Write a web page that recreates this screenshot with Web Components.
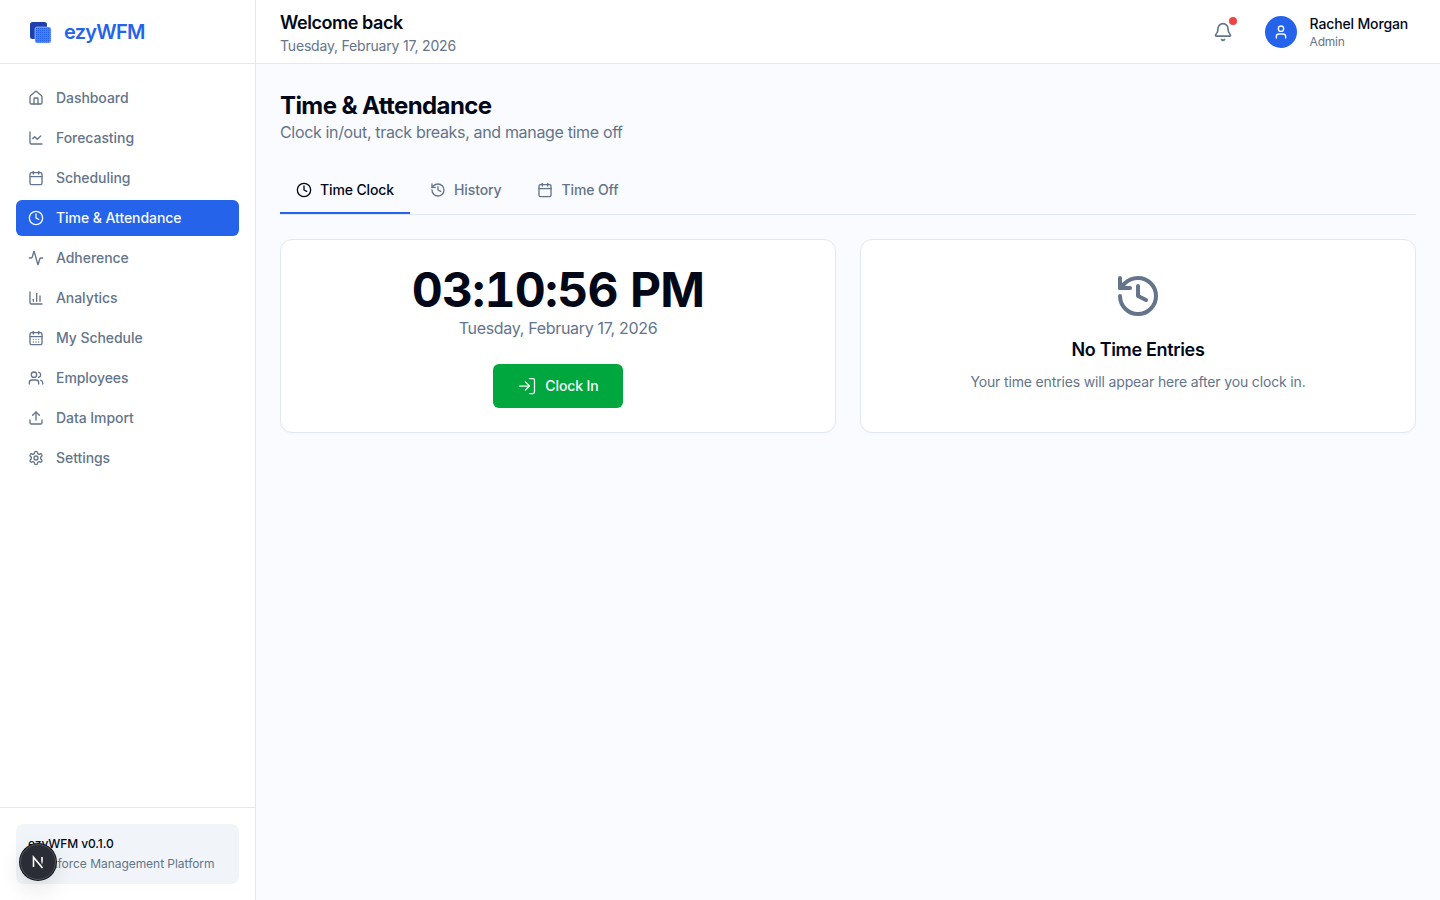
<!DOCTYPE html>
<html lang="en">
<head>
<meta charset="utf-8">
<title>ezyWFM - Time &amp; Attendance</title>
<style>
    html, body { margin: 0; height: 100%; }
    body { font-family: Inter, "Liberation Sans", sans-serif; color: #020817; background: #fafbfe; overflow: hidden; }
</style>
</head>
<body>
<wfm-app></wfm-app>
<script>
// Icon paths, one entry per glyph used on the page
const ICONS = {
    house: '<path d="M15 21v-8a1 1 0 0 0-1-1h-4a1 1 0 0 0-1 1v8"/><path d="M3 10a2 2 0 0 1 .709-1.528l7-5.999a2 2 0 0 1 2.582 0l7 5.999A2 2 0 0 1 21 10v9a2 2 0 0 1-2 2H5a2 2 0 0 1-2-2z"/>',
    'chart-line': '<path d="M3 3v16a2 2 0 0 0 2 2h16"/><path d="m19 9-5 5-4-4-3 3"/>',
    calendar: '<path d="M8 2v4"/><path d="M16 2v4"/><rect width="18" height="18" x="3" y="4" rx="2"/><path d="M3 10h18"/>',
    clock: '<circle cx="12" cy="12" r="10"/><polyline points="12 6 12 12 16 14"/>',
    activity: '<path d="M22 12h-2.48a2 2 0 0 0-1.93 1.46l-2.35 8.36a.25.25 0 0 1-.48 0L9.24 2.18a.25.25 0 0 0-.48 0l-2.35 8.36A2 2 0 0 1 4.49 12H2"/>',
    'chart-column': '<path d="M3 3v16a2 2 0 0 0 2 2h16"/><path d="M18 17V9"/><path d="M13 17V5"/><path d="M8 17v-3"/>',
    'calendar-days': '<path d="M8 2v4"/><path d="M16 2v4"/><rect width="18" height="18" x="3" y="4" rx="2"/><path d="M3 10h18"/><path d="M8 14h.01"/><path d="M12 14h.01"/><path d="M16 14h.01"/><path d="M8 18h.01"/><path d="M12 18h.01"/><path d="M16 18h.01"/>',
    users: '<path d="M16 21v-2a4 4 0 0 0-4-4H6a4 4 0 0 0-4 4v2"/><circle cx="9" cy="7" r="4"/><path d="M22 21v-2a4 4 0 0 0-3-3.87"/><path d="M16 3.13a4 4 0 0 1 0 7.75"/>',
    upload: '<path d="M21 15v4a2 2 0 0 1-2 2H5a2 2 0 0 1-2-2v-4"/><polyline points="17 8 12 3 7 8"/><line x1="12" x2="12" y1="3" y2="15"/>',
    settings: '<path d="M12.22 2h-.44a2 2 0 0 0-2 2v.18a2 2 0 0 1-1 1.73l-.43.25a2 2 0 0 1-2 0l-.15-.08a2 2 0 0 0-2.73.73l-.22.38a2 2 0 0 0 .73 2.73l.15.1a2 2 0 0 1 1 1.72v.51a2 2 0 0 1-1 1.74l-.15.09a2 2 0 0 0-.73 2.73l.22.38a2 2 0 0 0 2.73.73l.15-.08a2 2 0 0 1 2 0l.43.25a2 2 0 0 1 1 1.73V20a2 2 0 0 0 2 2h.44a2 2 0 0 0 2-2v-.18a2 2 0 0 1 1-1.73l.43-.25a2 2 0 0 1 2 0l.15.08a2 2 0 0 0 2.73-.73l.22-.39a2 2 0 0 0-.73-2.73l-.15-.08a2 2 0 0 1-1-1.74v-.5a2 2 0 0 1 1-1.74l.15-.09a2 2 0 0 0 .73-2.73l-.22-.38a2 2 0 0 0-2.73-.73l-.15.08a2 2 0 0 1-2 0l-.43-.25a2 2 0 0 1-1-1.73V4a2 2 0 0 0-2-2z"/><circle cx="12" cy="12" r="3"/>',
    bell: '<path d="M10.268 21a2 2 0 0 0 3.464 0"/><path d="M3.262 15.326A1 1 0 0 0 4 17h16a1 1 0 0 0 .74-1.673C19.41 13.956 18 12.499 18 8A6 6 0 0 0 6 8c0 4.499-1.411 5.956-2.738 7.326"/>',
    user: '<path d="M19 21v-2a4 4 0 0 0-4-4H9a4 4 0 0 0-4 4v2"/><circle cx="12" cy="7" r="4"/>',
    history: '<path d="M3 12a9 9 0 1 0 9-9 9.75 9.75 0 0 0-6.74 2.74L3 8"/><path d="M3 3v5h5"/><path d="M12 7v5l4 2"/>',
    'log-in': '<path d="M15 3h4a2 2 0 0 1 2 2v14a2 2 0 0 1-2 2h-4"/><polyline points="10 17 15 12 10 7"/><line x1="15" x2="3" y1="12" y2="12"/>'
};

const NAV = [
    ['house', 'Dashboard'],
    ['chart-line', 'Forecasting'],
    ['calendar', 'Scheduling'],
    ['clock', 'Time & Attendance', true],
    ['activity', 'Adherence'],
    ['chart-column', 'Analytics'],
    ['calendar-days', 'My Schedule'],
    ['users', 'Employees'],
    ['upload', 'Data Import'],
    ['settings', 'Settings']
];

class WfmIcon extends HTMLElement {
    connectedCallback() {
        const size = this.getAttribute('size') || 16;
        const stroke = this.getAttribute('stroke') || 2;
        this.attachShadow({ mode: 'open' }).innerHTML = `
            <style>:host { display: inline-flex; flex: none; width: ${size}px; height: ${size}px; } svg { display: block; }</style>
            <svg xmlns="http://www.w3.org/2000/svg" width="${size}" height="${size}" viewBox="0 0 24 24" fill="none"
                stroke="currentColor" stroke-width="${stroke}" stroke-linecap="round" stroke-linejoin="round">${ICONS[this.getAttribute('name')]}</svg>`;
    }
}

class WfmLogo extends HTMLElement {
    connectedCallback() {
        this.attachShadow({ mode: 'open' }).innerHTML = `
            <style>
                :host { display: flex; align-items: center; gap: 12px; }
                span { font-size: 20px; line-height: 28px; font-weight: 600; letter-spacing: -0.75px; color: #2563eb; }
                svg { display: block; }
            </style>
            <svg width="24" height="24" viewBox="0 0 24 24">
                <defs><pattern id="dots" width="2" height="2" patternUnits="userSpaceOnUse">
                    <rect width="2" height="2" fill="#3b82f6"/><rect width="1" height="1" fill="#2563eb"/>
                </pattern></defs>
                <rect x="2" y="2" width="17" height="17" rx="2.5" fill="#1e40af"/>
                <rect x="7" y="7" width="16" height="16" rx="2" fill="url(#dots)" stroke="#bfd4fb" stroke-width=".6"/>
            </svg>
            <span>ezyWFM</span>`;
    }
}

class NavItem extends HTMLElement {
    connectedCallback() {
        const active = this.hasAttribute('active');
        this.attachShadow({ mode: 'open' }).innerHTML = `
            <style>
                :host {
                    display: flex; align-items: center; gap: 12px; height: 36px; padding: 0 12px; box-sizing: border-box;
                    border-radius: 6px; font-size: 14px; line-height: 20px; font-weight: 500; letter-spacing: -0.06px;
                    color: ${active ? '#f8fafc' : '#64748b'}; background: ${active ? '#2563eb' : 'transparent'};
                }
            </style>
            <wfm-icon name="${this.getAttribute('icon')}" size="16"></wfm-icon>
            <slot></slot>`;
    }
}

class WfmSidebar extends HTMLElement {
    connectedCallback() {
        this.attachShadow({ mode: 'open' }).innerHTML = `
            <style>
                :host { display: flex; flex-direction: column; flex: none; width: 256px; height: 100%; box-sizing: border-box; background: #fff; border-right: 1px solid #e2e8f0; }
                .brand { display: flex; align-items: center; height: 64px; box-sizing: border-box; padding: 0 28px; border-bottom: 1px solid #e2e8f0; }
                nav { flex: 1; display: flex; flex-direction: column; gap: 4px; padding: 16px; }
                .foot { border-top: 1px solid #e2e8f0; padding: 16px; }
                .ver { height: 60px; box-sizing: border-box; padding: 12px; border-radius: 8px; background: #f1f5f9; font-size: 12px; line-height: 16px; }
                .ver b { display: block; font-weight: 500; letter-spacing: -0.08px; color: #020817; margin-bottom: 4px; }
                .ver span { letter-spacing: -0.04px; color: #64748b; }
            </style>
            <div class="brand"><wfm-logo></wfm-logo></div>
            <nav>${NAV.map(([icon, label, on]) => `<nav-item icon="${icon}" ${on ? 'active' : ''}>${label.replace('&', '&amp;')}</nav-item>`).join('')}</nav>
            <div class="foot"><div class="ver"><b>ezyWFM v0.1.0</b><span>Workforce Management Platform</span></div></div>`;
    }
}

class WfmHeader extends HTMLElement {
    connectedCallback() {
        this.attachShadow({ mode: 'open' }).innerHTML = `
            <style>
                :host { display: flex; align-items: center; justify-content: space-between; flex: none; height: 64px; box-sizing: border-box; padding: 0 32px 0 24px; background: #fff; border-bottom: 1px solid #e2e8f0; }
                h2 { margin: 0; padding-top: 1px; font-size: 18px; line-height: 28px; font-weight: 600; letter-spacing: -0.45px; }
                p { margin: -1px 0 0; font-size: 14px; line-height: 20px; letter-spacing: -0.19px; color: #64748b; }
                .right { display: flex; align-items: center; gap: 22px; }
                .bell { position: relative; display: flex; align-items: center; justify-content: center; width: 40px; height: 40px; color: #64748b; }
                .bell i { position: absolute; top: 5px; right: 6px; width: 8px; height: 8px; border-radius: 50%; background: #ef4444; }
                .user { display: flex; align-items: center; gap: 13px; }
                .avatar { display: flex; align-items: center; justify-content: center; width: 32px; height: 32px; border-radius: 50%; background: #2563eb; color: #f8fafc; }
                .name { font-size: 14px; line-height: 20px; font-weight: 500; letter-spacing: -0.15px; }
                .role { font-size: 12px; line-height: 16px; letter-spacing: -0.2px; color: #64748b; }
            </style>
            <div><h2>Welcome back</h2><p>Tuesday, February 17, 2026</p></div>
            <div class="right">
                <div class="bell"><wfm-icon name="bell" size="20"></wfm-icon><i></i></div>
                <div class="user">
                    <div class="avatar"><wfm-icon name="user" size="16"></wfm-icon></div>
                    <div><div class="name">Rachel Morgan</div><div class="role">Admin</div></div>
                </div>
            </div>`;
    }
}

class TabItem extends HTMLElement {
    connectedCallback() {
        const active = this.hasAttribute('active');
        this.attachShadow({ mode: 'open' }).innerHTML = `
            <style>
                :host {
                    display: flex; align-items: center; gap: 8px; height: 46px; padding: 0 16px; box-sizing: border-box;
                    font-size: 14px; line-height: 20px; font-weight: 500; letter-spacing: -0.12px;
                    color: ${active ? '#020817' : '#64748b'}; border-bottom: 2px solid ${active ? '#2563eb' : 'transparent'};
                }
            </style>
            <wfm-icon name="${this.getAttribute('icon')}" size="16"></wfm-icon>
            <slot></slot>`;
    }
}

class TabBar extends HTMLElement {
    connectedCallback() {
        this.attachShadow({ mode: 'open' }).innerHTML = `
            <style>:host { display: flex; gap: 4px; border-bottom: 1px solid #e2e8f0; }</style>
            <slot></slot>`;
    }
}

class WfmCard extends HTMLElement {
    connectedCallback() {
        this.attachShadow({ mode: 'open' }).innerHTML = `
            <style>
                :host { display: flex; flex-direction: column; align-items: center; box-sizing: border-box; min-width: 0; padding: 24px; background: #fff; border: 1px solid #e2e8f0; border-radius: 12px; box-shadow: 0 1px 2px rgba(0,0,0,.02); text-align: center; }
            </style>
            <slot></slot>`;
    }
}

class ClockCard extends HTMLElement {
    connectedCallback() {
        this.attachShadow({ mode: 'open' }).innerHTML = `
            <style>
                :host { display: flex; flex-direction: column; align-items: center; }
                .time { font-size: 48px; line-height: 52px; font-weight: 700; font-variant-numeric: tabular-nums; letter-spacing: -0.73px; color: #020817; }
                .date { font-size: 16px; line-height: 24px; letter-spacing: -0.31px; color: #64748b; }
                .btn { display: flex; align-items: center; justify-content: center; gap: 8px; width: 130px; height: 44px; box-sizing: border-box; padding-bottom: 1px; margin-top: 24px; border-radius: 6px; background: #00a63e; color: #f8fafc; font-size: 14px; line-height: 20px; font-weight: 500; letter-spacing: -0.1px; }
                .btn wfm-icon { margin-top: 1px; }
            </style>
            <div class="time">03:10:56 PM</div>
            <div class="date">Tuesday, February 17, 2026</div>
            <div class="btn"><wfm-icon name="log-in" size="20" stroke="1.5"></wfm-icon>Clock In</div>`;
    }
}

class EmptyEntries extends HTMLElement {
    connectedCallback() {
        this.attachShadow({ mode: 'open' }).innerHTML = `
            <style>
                :host { display: flex; flex-direction: column; align-items: center; padding-top: 8px; color: #64748b; }
                h3 { margin: 16px 0 0; font-size: 18px; line-height: 28px; font-weight: 600; letter-spacing: -0.33px; color: #020817; }
                p { margin: 8px 0 0; font-size: 14px; line-height: 20px; letter-spacing: -0.15px; }
            </style>
            <wfm-icon name="history" size="48"></wfm-icon>
            <h3>No Time Entries</h3>
            <p>Your time entries will appear here after you clock in.</p>`;
    }
}

class TimeAttendance extends HTMLElement {
    connectedCallback() {
        this.attachShadow({ mode: 'open' }).innerHTML = `
            <style>
                :host { display: block; flex: 1; padding: 24px; min-height: 0; }
                h1 { margin: 0 0 -4px; font-size: 24px; line-height: 36px; font-weight: 700; letter-spacing: -0.025em; }
                .sub { margin: 0 0 24px; font-size: 16px; line-height: 24px; letter-spacing: -0.34px; color: #64748b; }
                .grid { display: grid; grid-template-columns: 1fr 1fr; gap: 24px; margin-top: 24px; }
            </style>
            <h1>Time &amp; Attendance</h1>
            <p class="sub">Clock in/out, track breaks, and manage time off</p>
            <tab-bar>
                <tab-item icon="clock" active>Time Clock</tab-item>
                <tab-item icon="history">History</tab-item>
                <tab-item icon="calendar">Time Off</tab-item>
            </tab-bar>
            <div class="grid">
                <wfm-card><clock-card></clock-card></wfm-card>
                <wfm-card><empty-entries></empty-entries></wfm-card>
            </div>`;
    }
}

// Dev-tools badge that floats over the bottom-left corner
class NextBadge extends HTMLElement {
    connectedCallback() {
        this.attachShadow({ mode: 'open' }).innerHTML = `
            <style>
                :host { position: fixed; left: 20px; bottom: 20px; display: flex; align-items: center; justify-content: center; width: 36px; height: 36px; border-radius: 50%; background: #2a2d35; border: 1px solid #50545c; box-sizing: border-box; box-shadow: 0 0 0 1px #15171b, 0 8px 24px rgba(0,0,0,.12); }
                svg { display: block; }
            </style>
            <svg width="16" height="16" viewBox="0 0 16 16" fill="none" stroke-width="1.6">
                <defs><linearGradient id="fade" gradientUnits="userSpaceOnUse" x1="12" y1="3" x2="12" y2="11"><stop offset=".5" stop-color="#fff"/><stop offset="1" stop-color="#fff" stop-opacity="0"/></linearGradient></defs>
                <path d="M3.5 13V3.2L12.5 14" stroke="#fff"/>
                <path d="M12 3v8" stroke="url(#fade)"/>
            </svg>`;
    }
}

class WfmApp extends HTMLElement {
    connectedCallback() {
        this.attachShadow({ mode: 'open' }).innerHTML = `
            <style>
                :host { display: flex; height: 100vh; }
                main { flex: 1; min-width: 0; display: flex; flex-direction: column; }
            </style>
            <wfm-sidebar></wfm-sidebar>
            <main><wfm-header></wfm-header><time-attendance></time-attendance></main>
            <next-badge></next-badge>`;
    }
}

// Children first, the app shell last, so every tag is known when it gets rendered
customElements.define('wfm-icon', WfmIcon);
customElements.define('wfm-logo', WfmLogo);
customElements.define('nav-item', NavItem);
customElements.define('wfm-sidebar', WfmSidebar);
customElements.define('wfm-header', WfmHeader);
customElements.define('tab-item', TabItem);
customElements.define('tab-bar', TabBar);
customElements.define('wfm-card', WfmCard);
customElements.define('clock-card', ClockCard);
customElements.define('empty-entries', EmptyEntries);
customElements.define('time-attendance', TimeAttendance);
customElements.define('next-badge', NextBadge);
customElements.define('wfm-app', WfmApp);
</script>
</body>
</html>
